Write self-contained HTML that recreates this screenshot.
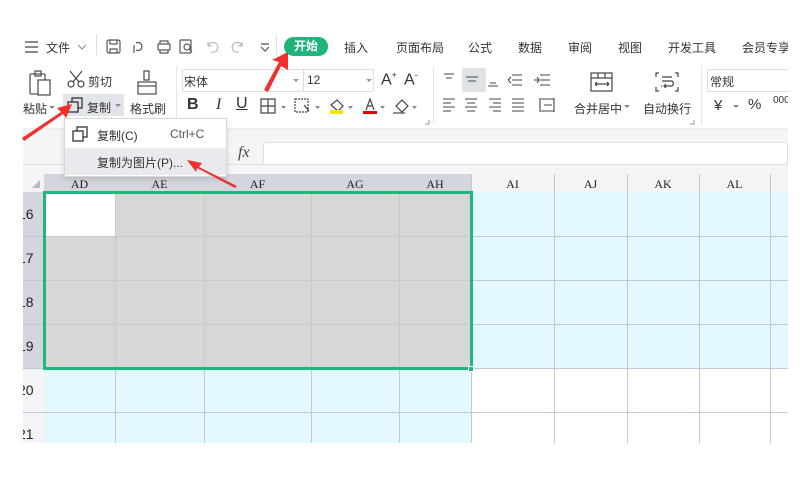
<!DOCTYPE html>
<html><head><meta charset="utf-8"><style>
*{margin:0;padding:0;box-sizing:border-box}
body{width:806px;height:479px;background:#fff;position:relative;overflow:hidden;font-family:"Liberation Sans","Noto Sans CJK SC",sans-serif;color:#333}
.a{position:absolute}
.t{position:absolute;font-size:12px;color:#333;white-space:nowrap}
.hc{position:absolute;top:175px;height:17px;font-family:"Liberation Serif","Noto Serif CJK SC",serif;font-size:12px;text-align:center;line-height:19px;color:#222}
.rh{position:absolute;left:23px;width:21px;height:20px;overflow:hidden;font-family:"Liberation Sans",sans-serif;font-size:14px;color:#222}
.rh span{position:absolute;left:-5px;top:0}
svg{position:absolute}
</style></head><body>
<!-- top menu -->
<svg style="left:24px;top:41px" width="16" height="12"><path d="M1 1h13M1 6h13M1 11h13" stroke="#444" stroke-width="1.3"/></svg>
<div class="t" style="left:46px;top:39px;font-size:12px">文件</div>
<svg style="left:77px;top:44px" width="10" height="6"><path d="M1 1l4 4 4-4" stroke="#888" fill="none"/></svg>
<div class="a" style="left:96px;top:35px;width:1px;height:20px;background:#ddd"></div>
<svg style="left:106px;top:39px" width="170" height="16" fill="none" stroke="#555" stroke-width="1.2">
<rect x="1" y="1" width="13" height="13" rx="2"/><path d="M4 1v4h7V1M4 14v-4h7v4"/>
<path d="M30 4a4 4 0 1 1 0 7M28 14v-8"/>
<rect x="52" y="5" width="12" height="6" rx="1"/><path d="M54 5V2h8v3M54 11v3h8v-3"/>
<rect x="74" y="1" width="11" height="13" rx="1"/><circle cx="81" cy="8" r="3"/><path d="M83 10l3 3"/>
<path d="M102 7a5 5 0 1 1 3 6M102 3v4h4" stroke="#bbb"/>
<path d="M136 7a5 5 0 1 0-3 6M136 3v4h-4" stroke="#bbb"/>
<path d="M155 5h8M155 8l4 4 4-4"/>
</svg>
<div class="a" style="left:276px;top:35px;width:1px;height:20px;background:#ddd"></div>
<div class="a" style="left:284px;top:37px;width:44px;height:19px;border-radius:10px;background:#1fb57a;color:#fff;font-size:12px;font-weight:bold;text-align:center;line-height:19px">开始</div>
<div class="t" style="left:344px;top:39px">插入</div>
<div class="t" style="left:396px;top:39px">页面布局</div>
<div class="t" style="left:468px;top:39px">公式</div>
<div class="t" style="left:518px;top:39px">数据</div>
<div class="t" style="left:568px;top:39px">审阅</div>
<div class="t" style="left:618px;top:39px">视图</div>
<div class="t" style="left:668px;top:39px">开发工具</div>
<div class="t" style="left:742px;top:39px;width:46px;overflow:hidden">会员专享</div>
<!-- ribbon -->
<svg style="left:28px;top:70px" width="26" height="28" fill="none" stroke="#555" stroke-width="1.3"><rect x="2" y="4" width="15" height="20" rx="1"/><rect x="7" y="1" width="6" height="5"/><rect x="10" y="10" width="12" height="15" fill="#fff"/></svg>
<div class="t" style="left:23px;top:100px">粘贴</div>
<svg style="left:49px;top:106px" width="6" height="4"><path d="M0 0h6L3 3z" fill="#888"/></svg>
<svg style="left:67px;top:70px" width="18" height="18" fill="none" stroke="#444" stroke-width="1.2"><circle cx="4" cy="14" r="3"/><circle cx="14" cy="14" r="3"/><path d="M6 12L15 1M12 12L3 1"/></svg>
<div class="t" style="left:88px;top:73px">剪切</div>
<svg style="left:135px;top:70px" width="24" height="26" fill="none" stroke="#555" stroke-width="1.3"><rect x="9" y="1" width="5" height="9"/><path d="M3 12h18v12H3z"/><path d="M3 16h18"/></svg>
<div class="t" style="left:130px;top:100px">格式刷</div>
<div class="a" style="left:63px;top:94px;width:61px;height:22px;background:#e1e4e8"></div>
<svg style="left:67px;top:97px" width="16" height="16" fill="none" stroke="#333" stroke-width="1.3"><rect x="5" y="1" width="10" height="10"/><rect x="1" y="5" width="10" height="10" fill="#e1e4e8"/></svg>
<div class="t" style="left:87px;top:99px">复制</div>
<svg style="left:115px;top:104px" width="6" height="4"><path d="M0 0h6L3 3z" fill="#888"/></svg>
<div class="a" style="left:176px;top:66px;width:1px;height:58px;background:#e6e6e6"></div>
<div class="a" style="left:182px;top:69px;width:192px;height:23px;border:1px solid #ddd;border-radius:2px"></div>
<div class="a" style="left:303px;top:69px;width:1px;height:23px;background:#ddd"></div>
<div class="t" style="left:184px;top:73px">宋体</div>
<div class="t" style="left:307px;top:73px">12</div>
<svg style="left:293px;top:79px" width="6" height="4"><path d="M0 0h6L3 3z" fill="#999"/></svg>
<svg style="left:366px;top:79px" width="6" height="4"><path d="M0 0h6L3 3z" fill="#999"/></svg>
<div class="t" style="left:381px;top:70px;font-size:16px">A<sup style="font-size:9px">+</sup></div>
<div class="t" style="left:404px;top:70px;font-size:16px">A<sup style="font-size:9px">-</sup></div>
<div class="t" style="left:187px;top:96px;font-size:16px;font-weight:bold">B</div>
<div class="t" style="left:216px;top:96px;font-size:16px;font-style:italic;font-family:'Liberation Serif',serif">I</div>
<div class="t" style="left:236px;top:95px;font-size:16px;text-decoration:underline">U</div>
<svg style="left:260px;top:98px" width="160" height="18" fill="none" stroke="#444" stroke-width="1.2">
<rect x="1" y="1" width="14" height="14"/><path d="M8 1v14M1 8h14"/><path d="M21 8h5l-2.5 3z" fill="#888" stroke="none"/>
<rect x="35" y="1" width="13" height="13" stroke-dasharray="2 1"/><path d="M44 7l5 6"/><path d="M55 8h5l-2.5 3z" fill="#888" stroke="none"/>
<path d="M71 7l6-5 6 6-5 5z"/><rect x="70" y="12" width="13" height="4" fill="#f5e600" stroke="none"/><path d="M88 8h5l-2.5 3z" fill="#888" stroke="none"/>
<path d="M106 12l4-11 4 11M107 8h6"/><rect x="103" y="13" width="14" height="3" fill="#e00" stroke="none"/><path d="M120 8h5l-2.5 3z" fill="#888" stroke="none"/>
<path d="M136 8l6-6 6 6-6 6z"/><path d="M133 15h12"/><path d="M152 8h5l-2.5 3z" fill="#888" stroke="none"/>
</svg>
<div class="a" style="left:433px;top:66px;width:1px;height:58px;background:#e6e6e6"></div>
<div class="a" style="left:462px;top:68px;width:24px;height:24px;background:#dfe2e6;border-radius:2px"></div>
<svg style="left:440px;top:72px" width="120" height="45" fill="none" stroke="#444" stroke-width="1.1">
<path d="M4 2h10M6 6h6M26 5h12M28 9h8M50 11h6M48 14h10M72 3h10M72 8h10M72 13h10M68 8l3-3M68 8l3 3M100 3h10M100 8h10M100 13h10M94 8h5M97 5l2 3-2 3"/>
<path d="M3 27h12M3 31h8M3 35h12M3 39h8M25 27h12M27 31h8M25 35h12M27 39h8M49 27h12M53 31h8M49 35h12M53 39h8M72 27h12M72 31h12M72 35h12M72 39h12M100 26v14M101 27h13M101 39h13M114 26v14M104 33h8"/>
</svg>
<svg style="left:590px;top:72px" width="24" height="20" fill="none" stroke="#444" stroke-width="1.2"><rect x="1" y="1" width="21" height="18"/><path d="M1 6h21M8 1v5M15 1v5M5 12h14M5 12l2-2M5 12l2 2M19 12l-2-2M19 12l-2 2"/></svg>
<div class="t" style="left:574px;top:100px">合并居中</div>
<svg style="left:624px;top:105px" width="6" height="4"><path d="M0 0h6L3 3z" fill="#888"/></svg>
<svg style="left:655px;top:72px" width="24" height="20" fill="none" stroke="#444" stroke-width="1.2"><path d="M4 1H1v4M20 1h3v4M4 19H1v-4M20 19h3v-4M7 5h10M7 9h10a3 3 0 0 1 0 5H9M11 12l-2 2 2 2M7 14h-1"/></svg>
<div class="t" style="left:643px;top:100px">自动换行</div>
<div class="a" style="left:701px;top:66px;width:1px;height:58px;background:#e6e6e6"></div>
<div class="a" style="left:707px;top:69px;width:81px;height:23px;border:1px solid #ddd;border-right:none;border-radius:2px 0 0 2px"></div>
<div class="t" style="left:710px;top:73px">常规</div>
<div class="t" style="left:714px;top:97px;font-size:15px">¥</div>
<svg style="left:733px;top:105px" width="6" height="4"><path d="M0 0h6L3 3z" fill="#888"/></svg>
<div class="t" style="left:748px;top:96px;font-size:15px">%</div>
<div class="t" style="left:773px;top:95px;font-size:10px;width:15px;overflow:hidden">000</div>
<svg style="left:425px;top:120px" width="5" height="5"><path d="M4 0v4H0" stroke="#999" fill="none"/></svg>
<svg style="left:690px;top:120px" width="5" height="5"><path d="M4 0v4H0" stroke="#999" fill="none"/></svg>
<!-- gray band + formula bar -->
<div class="a" style="left:23px;top:129px;width:765px;height:46px;background:#f4f5f7"></div>
<div class="a" style="left:23px;top:128px;width:765px;height:2px;background:#eceef0"></div>
<div class="a" style="left:23px;top:164px;width:765px;height:1px;background:#dcdfe3"></div>
<div class="a" style="left:263px;top:142px;width:525px;height:23px;background:#fff;border:1px solid #dcdfe3;border-radius:3px"></div>
<div class="t" style="left:238px;top:144px;font-size:16px;font-style:italic;font-family:'Liberation Serif',serif;color:#444">fx</div>
<!-- column headers -->
<div class="a" style="left:23px;top:174px;width:765px;height:18px;background:#f3f4f6"></div>
<div class="a" style="left:44px;top:174px;width:427px;height:18px;background:#d3d6de"></div>
<svg style="left:31px;top:179px" width="10" height="10"><path d="M9 1v8H1z" fill="#bbb"/></svg>
<div class="hc" style="left:44px;width:71px">AD</div>
<div class="hc" style="left:115px;width:89px">AE</div>
<div class="hc" style="left:204px;width:107px">AF</div>
<div class="hc" style="left:311px;width:88px">AG</div>
<div class="hc" style="left:399px;width:72px">AH</div>
<div class="hc" style="left:471px;width:83px">AI</div>
<div class="hc" style="left:554px;width:73px">AJ</div>
<div class="hc" style="left:627px;width:72px">AK</div>
<div class="hc" style="left:699px;width:71px">AL</div>
<!-- row headers -->
<div class="a" style="left:23px;top:192px;width:21px;height:176px;background:#d3d6de"></div>
<div class="a" style="left:23px;top:368px;width:21px;height:75px;background:#f3f4f6"></div>
<div class="rh" style="top:206px"><span>16</span></div>
<div class="rh" style="top:250px"><span>17</span></div>
<div class="rh" style="top:294px"><span>18</span></div>
<div class="rh" style="top:338px"><span>19</span></div>
<div class="rh" style="top:382px"><span>20</span></div>
<div class="rh" style="top:426px;height:17px"><span>21</span></div>
<!-- cells -->
<div class="a" style="left:44px;top:192px;width:427px;height:176px;background:#d7d7d7"></div>
<div class="a" style="left:44px;top:192px;width:71px;height:44px;background:#fff"></div>
<div class="a" style="left:471px;top:192px;width:317px;height:176px;background:#e3f8fd"></div>
<div class="a" style="left:44px;top:368px;width:427px;height:75px;background:#e3f8fd"></div>
<svg style="left:0;top:0" width="806" height="479" stroke="#c2c8d6" stroke-width="1">
<path d="M115.5 192V443M204.5 192V443M311.5 192V443M399.5 192V443M471.5 174V443M554.5 174V443M627.5 174V443M699.5 174V443M770.5 174V443"/>
<path d="M23 236.5H788M23 280.5H788M23 324.5H788M23 368.5H788M23 412.5H788"/>
</svg>
<div class="a" style="left:43px;top:191px;width:430px;height:179px;border:3px solid #21b77a"></div>
<div class="a" style="left:468px;top:366px;width:6px;height:6px;background:#21b77a;border:1px solid #fff"></div>
<!-- dropdown menu -->
<div class="a" style="left:64px;top:118px;width:163px;height:59px;background:#fff;border:1px solid #d8d8d8;box-shadow:0 2px 5px rgba(0,0,0,.15)"></div>
<div class="a" style="left:65px;top:148px;width:161px;height:27px;background:#e8eaee"></div>
<svg style="left:72px;top:126px" width="16" height="16" fill="none" stroke="#333" stroke-width="1.3"><rect x="5" y="1" width="10" height="10"/><rect x="1" y="5" width="10" height="10" fill="#fff"/></svg>
<div class="t" style="left:97px;top:127px">复制(C)</div>
<div class="t" style="left:170px;top:127px;color:#555">Ctrl+C</div>
<div class="t" style="left:97px;top:154px">复制为图片(P)...</div>
<!-- red arrows -->
<svg style="left:0;top:0" width="806" height="479">
<g fill="#f0302c">
<path d="M264 90L279 62L272 60L288 52L288 70L281 66L268 92Z"/>
<path d="M22 138L61 112L57 108L72 104L66 118L63 114L24 141Z"/>
<path d="M237 186L199 167L202 163L187 160L196 172L197 168L235 188Z"/>
</g>
</svg>
</body></html>
